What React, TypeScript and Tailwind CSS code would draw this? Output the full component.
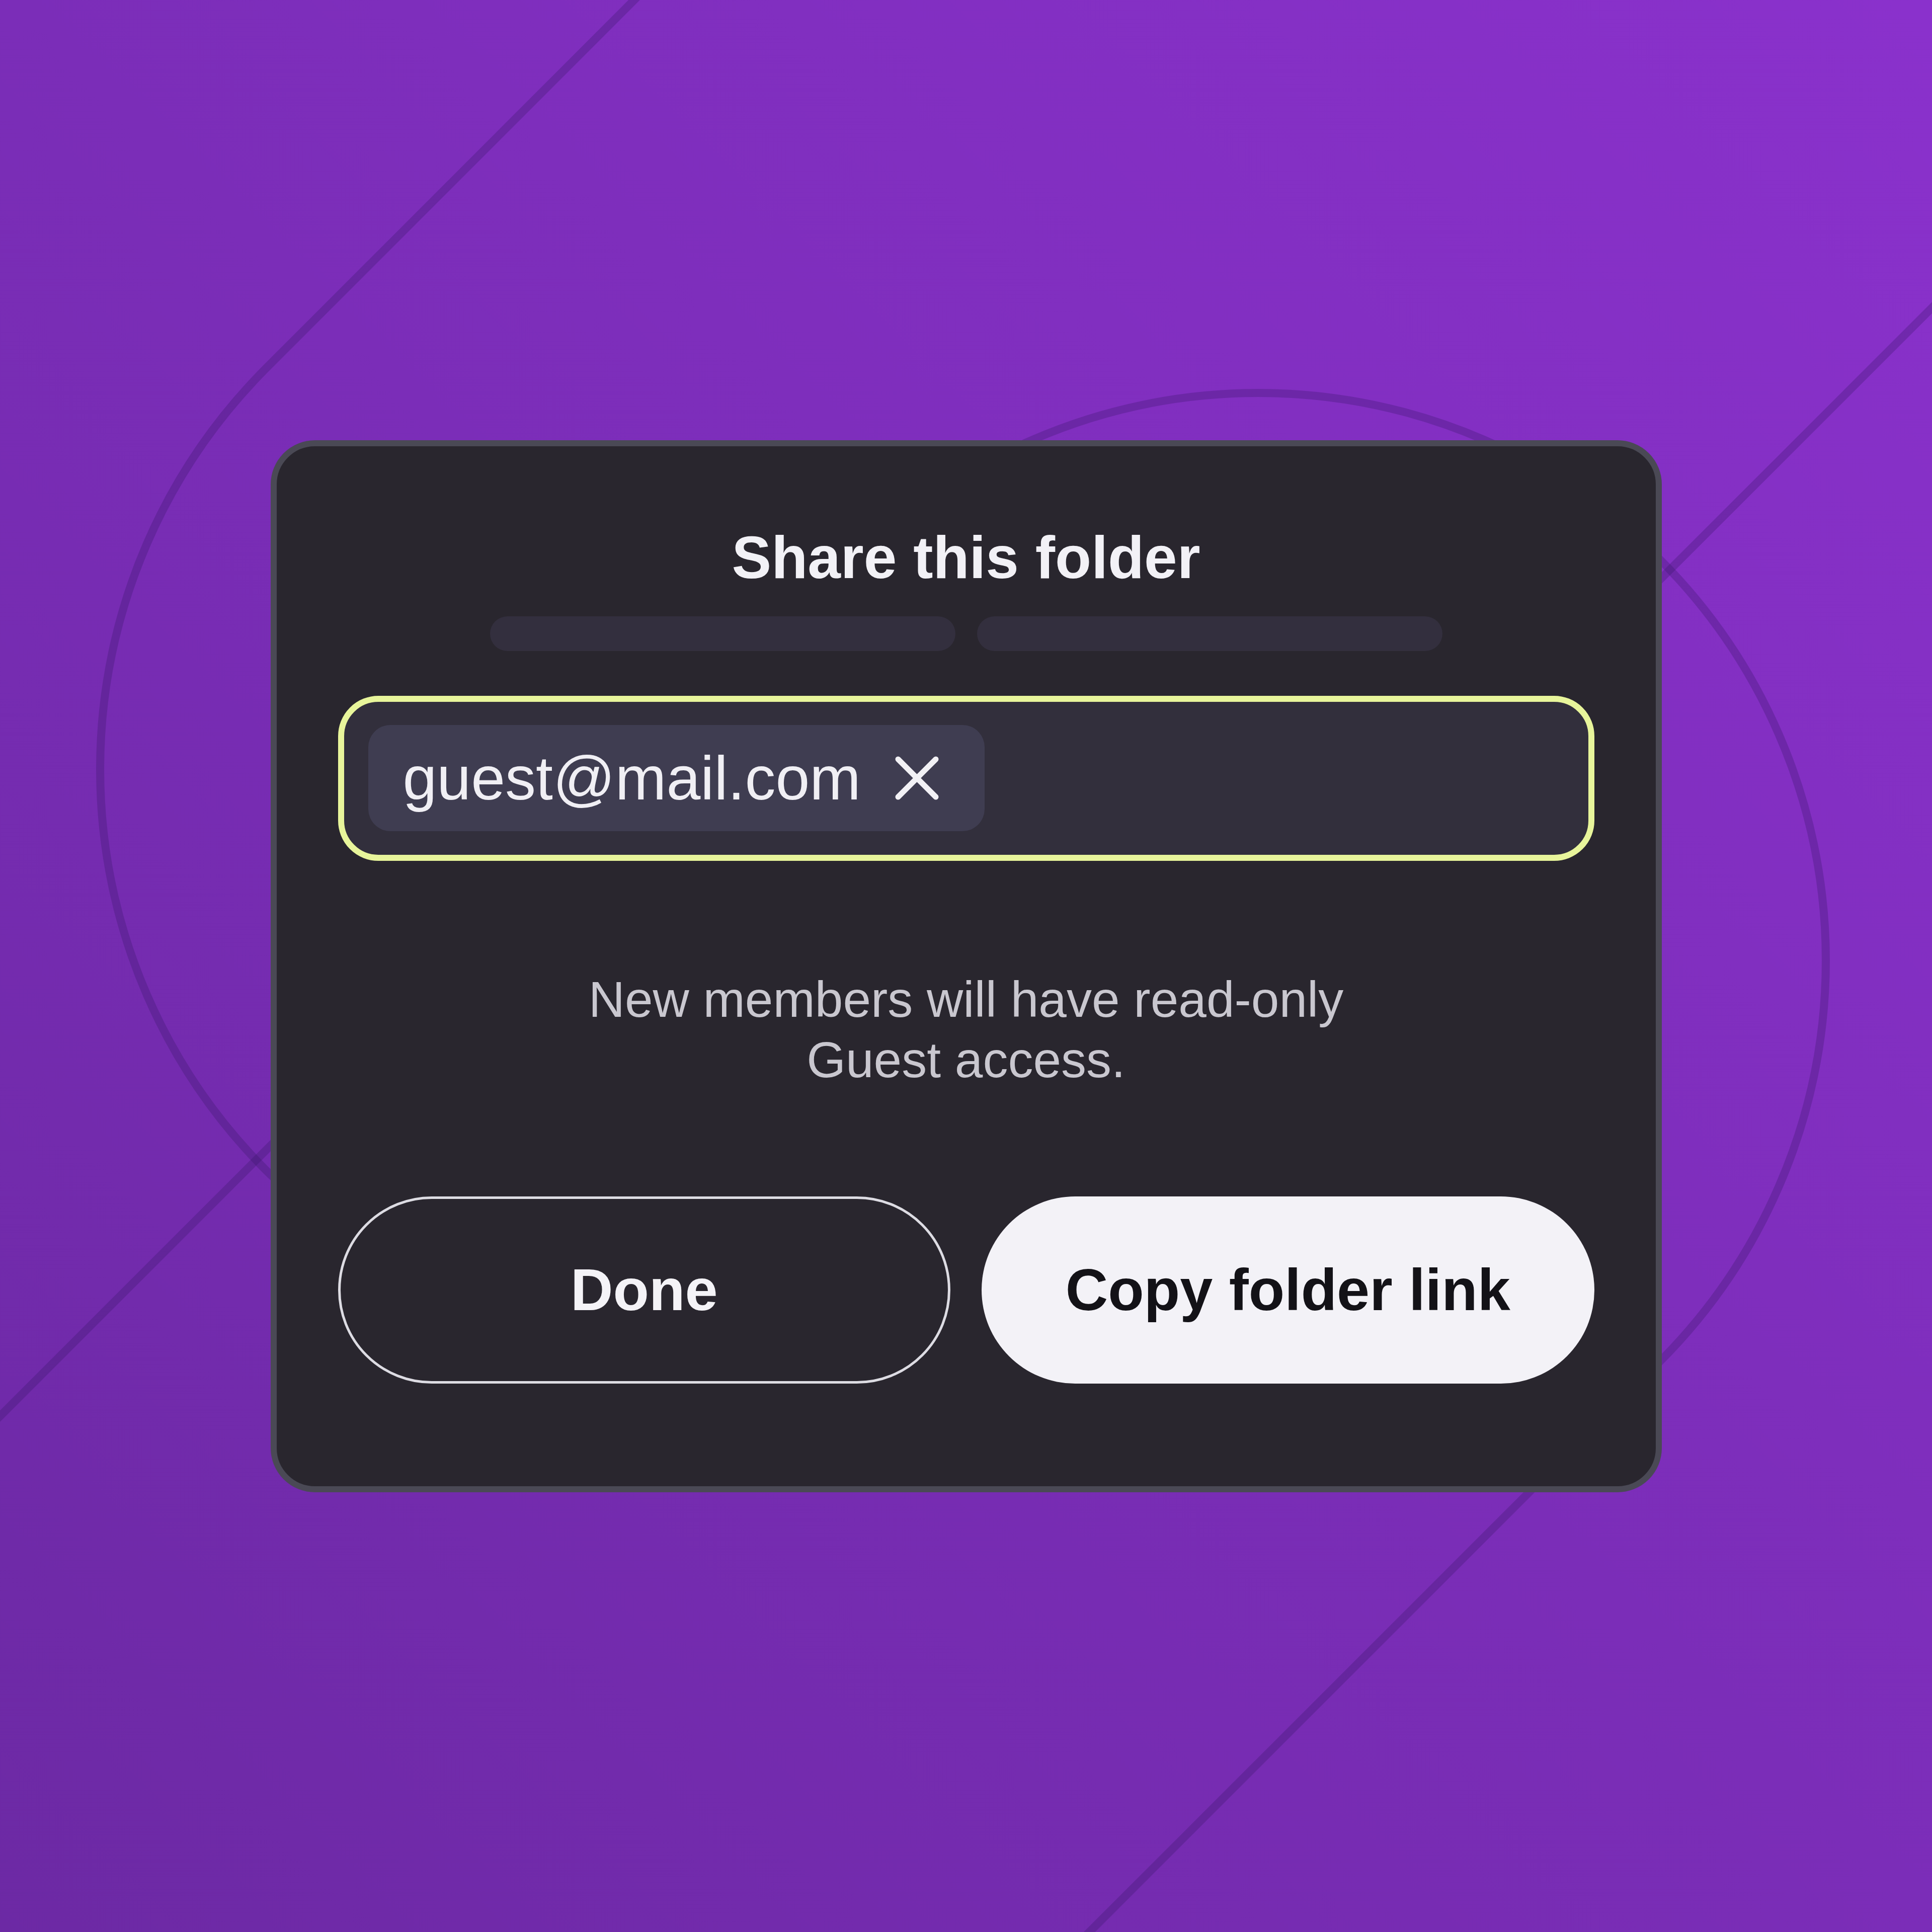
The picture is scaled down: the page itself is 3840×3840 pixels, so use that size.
import React from "react";

function Backdrop() {
  return (
    <svg
      className="absolute inset-0 h-full w-full"
      viewBox="0 0 3840 3840"
      fill="none"
      aria-hidden="true"
    >
      <path
        d="M 2650 -1390 L 529.4 731.4 A 1128 1128 0 0 0 529.4 2326.6 A 1128 1128 0 0 0 2124.6 2326.6 L 4246 205.6"
        stroke="rgba(55,20,100,0.28)"
        strokeWidth="16"
      />
      <path
        d="M -417.6 3232.4 L 1703.4 1111.4 A 1128 1128 0 0 1 3298.6 1111.4 A 1128 1128 0 0 1 3298.6 2706.6 L 1177.6 4827.6"
        stroke="rgba(55,20,100,0.28)"
        strokeWidth="16"
      />
    </svg>
  );
}

function CloseIcon() {
  return (
    <svg width="87" height="87" viewBox="0 0 87 87" fill="none" aria-hidden="true">
      <path
        d="M6 6 L81 81 M81 6 L6 81"
        stroke="#f2f1f5"
        strokeWidth="11"
        strokeLinecap="round"
      />
    </svg>
  );
}

export default function App() {
  return (
    <div className="relative flex h-[3840px] w-[3840px] items-center justify-center overflow-hidden bg-linear-to-bl from-[#8a31cc] to-[#6c29a4] font-['Liberation_Sans',Arial,sans-serif]">
      <Backdrop />
      <div className="relative flex w-[2765px] flex-col items-center rounded-[88px] border-[12px] border-[#4a4955] bg-[#29262e] px-[122px] pb-[204px] pt-[149px]">
        <h1 className="text-[118px] font-bold leading-[144px] text-[#f2f1f6]">
          Share this folder
        </h1>

        <div className="mt-[45px] flex gap-[43px]">
          <div className="h-[69px] w-[925px] rounded-full bg-[#332f3e]" />
          <div className="h-[69px] w-[925px] rounded-full bg-[#332f3e]" />
        </div>

        <div className="mt-[89px] flex h-[328px] w-full items-center rounded-[80px] border-[12px] border-[#e8f59b] bg-[#322f3c] pl-[48px]">
          <div className="flex h-[211px] items-center rounded-[44px] bg-[#3f3d51] pl-[69px] pr-[91px]">
            <span className="text-[122px] leading-none text-[#f0eff4]">guest@mail.com</span>
            <span className="ml-[68px] flex">
              <CloseIcon />
            </span>
          </div>
        </div>

        <p className="mt-[215px] text-center text-[100px] leading-[120px] text-[#c9c7cf]">
          New members will have read-only
          <br />
          Guest access.
        </p>

        <div className="mt-[212px] grid w-full grid-cols-2 gap-[62px]">
          <button className="flex h-[372px] items-center justify-center rounded-full border-[5px] border-[#dddce3] bg-transparent text-[117px] font-bold text-[#f4f3f7]">
            Done
          </button>
          <button className="flex h-[372px] items-center justify-center rounded-full bg-[#f3f2f7] text-[117px] font-bold text-[#131217]">
            Copy folder link
          </button>
        </div>
      </div>
    </div>
  );
}
